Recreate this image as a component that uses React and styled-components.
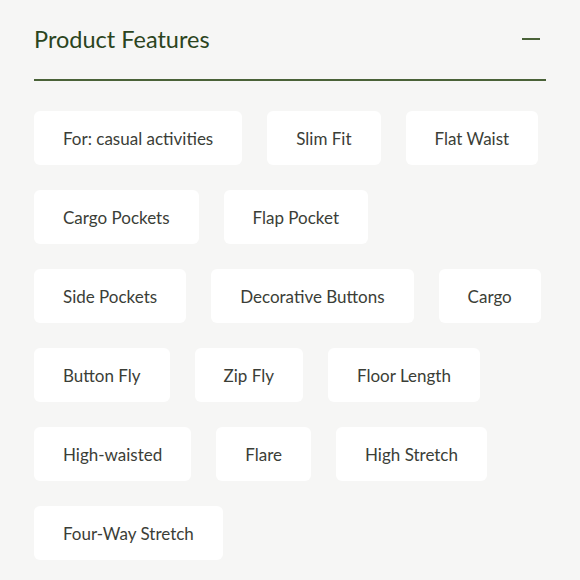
import React, { useState } from 'react';
import styled, { createGlobalStyle } from 'styled-components';

const GlobalStyle = createGlobalStyle`
    body {
        margin: 0;
        background: #f6f6f5;
        font-family: "Lato", "Noto Sans", sans-serif;
    }
`

const features = [
    "For: casual activities",
    "Slim Fit",
    "Flat Waist",
    "Cargo Pockets",
    "Flap Pocket",
    "Side Pockets",
    "Decorative Buttons",
    "Cargo",
    "Button Fly",
    "Zip Fly",
    "Floor Length",
    "High-waisted",
    "Flare",
    "High Stretch",
    "Four-Way Stretch",
]

function App() {
    const [open, setOpen] = useState(true)

    return (
        <>
            <GlobalStyle />
            <Section>
                <Header onClick={() => setOpen(!open)}>
                    <Title>Product Features</Title>
                    <Toggle aria-label="toggle">
                        <svg width="18" height="18" viewBox="0 0 18 18">
                            <line x1="0" y1="9" x2="18" y2="9" stroke="#4a6238" strokeWidth="2" />
                            {!open && <line x1="9" y1="0" x2="9" y2="18" stroke="#4a6238" strokeWidth="2" />}
                        </svg>
                    </Toggle>
                </Header>
                {open &&
                    <ChipList>
                        {features.map((item, index) => (
                            <Chip key={index}>{item}</Chip>
                        ))}
                    </ChipList>
                }
            </Section>
        </>
    )
}
export default App

const Section = styled.section`
    padding: 0 34px;
`

const Header = styled.div`
    display: flex;
    align-items: center;
    justify-content: space-between;
    padding: 25px 0 26px;
    border-bottom: 2px solid #4a6238;
    cursor: pointer;
`

const Title = styled.h2`
    margin: 0;
    font-size: 23.5px;
    line-height: 28px;
    font-weight: 400;
    color: #2b4420;
`

const Toggle = styled.button`
    display: flex;
    background: none;
    border: none;
    padding: 0;
    margin-right: 6px;
    cursor: pointer;
`

const ChipList = styled.div`
    display: flex;
    flex-wrap: wrap;
    gap: 25px;
    padding: 30px 3px 0 0;
`

const Chip = styled.div`
    height: 54px;
    display: flex;
    align-items: center;
    padding: 0 29px;
    background: #ffffff;
    border-radius: 6px;
    font-size: 17px;
    color: #3b3e37;
    white-space: nowrap;
`
